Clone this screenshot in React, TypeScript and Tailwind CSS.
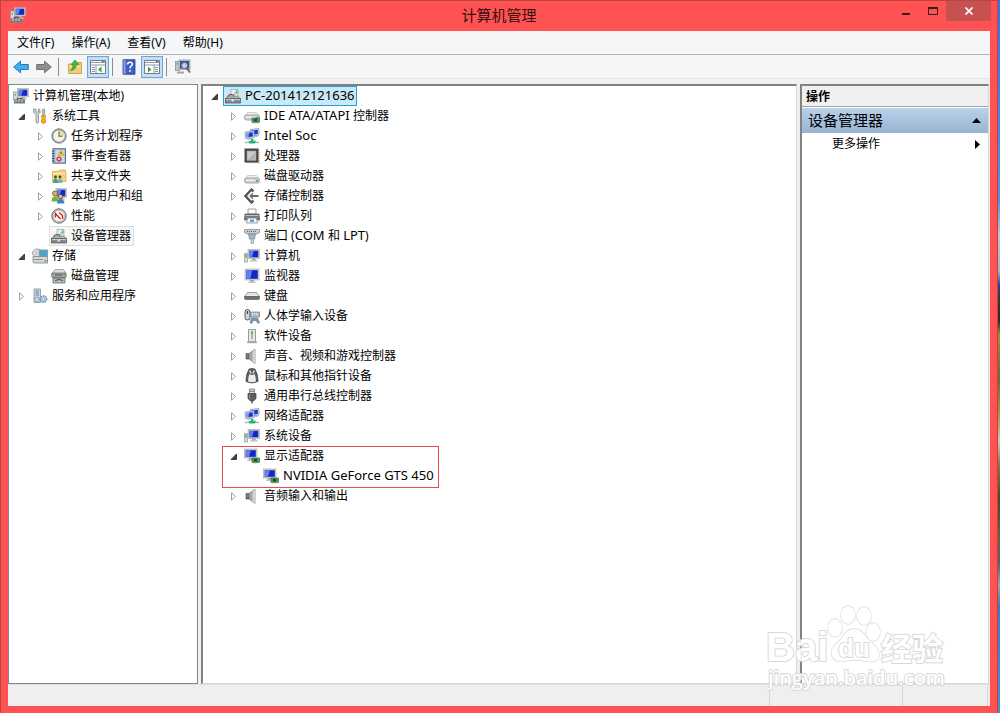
import type { ReactNode } from "react";
import clsx from "clsx";

type IconName = keyof typeof icons;

interface TreeNode {
  label: string;
  icon: IconName;
  state?: "open" | "closed";
  selected?: "active" | "inactive";
  marked?: boolean;
  children?: TreeNode[];
}

/* ---------- icon parts ---------- */

function Screen({ x = 0, y = 0, w = 11, h = 8 }: { x?: number; y?: number; w?: number; h?: number }) {
  return (
    <g>
      <rect x={x + w / 2 - 2} y={y + h} width="4" height="2" fill="#a9a9a4" />
      <rect x={x + w / 2 - 3.5} y={y + h + 1.5} width="7" height="1.5" fill="#c4c4be" />
      <rect x={x} y={y} width={w} height={h} fill="#d3d5d2" stroke="#a3a5a3" strokeWidth=".6" />
      <rect x={x + 1.2} y={y + 1.2} width={w - 2.4} height={h - 2.4} fill="#1526c4" />
      <path d={`M${x + 1.2} ${y + 1.2}h${w / 2 - 1}l-2 ${h - 2.4}h${-(w / 2 - 3)}z`} fill="#5f83ee" />
    </g>
  );
}

function MiniScreen({ x, y }: { x: number; y: number }) {
  return (
    <g>
      <path d={`M${x + 3} ${y + 6.5}h4l1 2h-6z`} fill="#b4bcc4" />
      <path d={`M${x} ${y + 1}l9-1v6.500l-8.500 1z`} fill="#cfdcec" stroke="#7f96b4" strokeWidth=".7" />
      <path d={`M${x + 1.3} ${y + 2}l6.500-.7v4.200l-6.200.8z`} fill="#1c35d2" />
      <path d={`M${x + 1.3} ${y + 2}l3-.3-1 4.200-1.700.3z`} fill="#7fa3f2" />
    </g>
  );
}

function Chip() {
  return (
    <g>
      <rect x="8" y="10" width="7.500" height="4.500" fill="#3f9a66" stroke="#2a6a46" strokeWidth=".6" />
      <rect x="10" y="11" width="3" height="2.500" fill="#1c4a31" />
      <path d="M9 15h6" stroke="#d0b64a" strokeDasharray="1 1" />
    </g>
  );
}

function Drive({ y = 0 }: { y?: number }) {
  return (
    <g transform={`translate(0 ${y})`}>
      <path d="M3.500 5.500h9l2.500 3.500H1z" fill="#f0f0f1" stroke="#b1b3b5" strokeWidth=".6" />
      <rect x=".5" y="8" width="15" height="5" rx="2" fill="#cfd1d3" stroke="#85888b" strokeWidth=".7" />
      <rect x="2" y="9.500" width="9" height="1.200" fill="#f0f1f2" />
      <rect x="12" y="10" width="2" height="1.600" fill="#36b336" />
    </g>
  );
}

const manage = (
  <>
    <rect x=".5" y="4" width="4" height="8" fill="#d8dadb" stroke="#8d9192" strokeWidth=".7" />
    <rect x="1.500" y="6" width="1.500" height="1.500" fill="#3bbb3b" />
    <Screen x={4.5} y={0.5} w={11} h={8.5} />
    <path d="M1 11.500h11v4H1z" fill="#6f7f88" />
    <path d="M2 13h9" stroke="#d5dde0" strokeDasharray="2 1" />
    <path d="M4 11.500v-1h5v1" fill="none" stroke="#4d5a61" />
  </>
);

const computer = (
  <>
    <rect x=".5" y="5.500" width="3" height="8.500" fill="#d4d6d6" stroke="#9c9fa0" strokeWidth=".7" />
    <rect x="1.200" y="6.500" width="1.400" height="3" fill="#35b435" />
    <Screen x={4} y={1.5} w={11.5} h={9} />
  </>
);

const network = (
  <>
    <MiniScreen x={6} y={0.5} />
    <MiniScreen x={1} y={3} />
    <path d="M1 14.500h14" stroke="#9fb3ab" strokeWidth="1.200" />
    <path d="M7 11h2.500v1.800H12l-1 2.700H5.500l-1-2.700H7z" fill="#2bb673" />
  </>
);

const speaker = (
  <>
    <path d="M2 5.500h3v5.500H2z" fill="#5d6265" stroke="#474b4e" strokeWidth=".6" />
    <path d="M5 5.500L11 1v14.500L5 11z" fill="#a3a8ab" stroke="#73787b" strokeWidth=".7" />
    <path d="M8.500 3.500L11 1v14.500l-2.500-2z" fill="#d0d4d6" />
    <path d="M2.500 7h2M2.500 9h2" stroke="#b7bcbf" strokeWidth=".7" />
  </>
);

const device = (
  <>
    <path d="M6 1.500h7v7H6z" fill="#eceeee" stroke="#9a9d9d" strokeWidth=".7" />
    <path d="M7 7l4-4v4z" fill="#c2c6c6" />
    <rect x="11" y="2.500" width="1.500" height="3" fill="#4cc04c" />
    <path d="M2.500 8h10.500l2.500 3H.5z" fill="#b4b8ba" stroke="#6e7274" strokeWidth=".6" />
    <rect x=".5" y="10.500" width="15" height="4.500" fill="#868b8e" stroke="#505456" strokeWidth=".7" />
    <path d="M1 11.500h14" stroke="#c9cdcf" />
    <path d="M3 8.500q0-2 3-2t3 2" fill="none" stroke="#4a4e50" />
    <rect x="6.500" y="11.500" width="2.500" height="2" fill="#e2e4e5" />
  </>
);

const display = (
  <>
    <Screen x={0.5} y={1} w={12.5} h={9} />
    <Chip />
  </>
);

const icons = {
  manage,
  computer,
  network,
  speaker,
  device,
  display,
  tools: (
    <>
      <path d="M1.500 1v3.500L4 6.500v8q1.200 1.500 2.500 0v-8L8 4.500V1.500L6.500 1v3h-2.500V1z" fill="#cfd3d6" stroke="#858b90" strokeWidth=".8" />
      <path d="M10.500 1h2l.5 3.500-.8 3h-1.200l-.8-3z" fill="#b8bcc0" stroke="#868b90" strokeWidth=".6" />
      <path d="M9.500 7.500h4v2l-.7 1 .7 1.500v2.500q-2 1.800-4 0V12l.7-1.500-.7-1z" fill="#f3ad1c" stroke="#c48212" strokeWidth=".7" />
    </>
  ),
  clock: (
    <>
      <circle cx="8" cy="8" r="7.200" fill="#a3a6a6" stroke="#6f7373" strokeWidth=".8" />
      <circle cx="8" cy="8" r="5.600" fill="#f6f4e6" />
      <path d="M8 8V2.400A5.600 5.600 0 0 1 13.600 8z" fill="#f3dc9c" />
      <path d="M8 3.500V8.300h3.500" fill="none" stroke="#56646f" strokeWidth="1.100" />
    </>
  ),
  event: (
    <>
      <rect x="2" y=".7" width="12.500" height="14.500" fill="#a6bdd8" stroke="#4d6485" strokeWidth=".9" />
      <rect x="4.500" y="2" width="9" height="12" fill="#c9d8ea" />
      <path d="M1 3h2.500M1 5.500h2.500M1 8h2.500M1 10.500h2.500M1 13h2.500" stroke="#3c4c66" />
      <path d="M10 2.200l3 5H7z" fill="#f5cf28" stroke="#b9930f" strokeWidth=".5" />
      <path d="M10 4v1.700" stroke="#333" strokeWidth=".8" />
      <circle cx="8" cy="11" r="2.600" fill="#d93a35" />
      <circle cx="8" cy="11" r="1" fill="#fff" />
    </>
  ),
  shared: (
    <>
      <path d="M1.500 3.500h6l1-1.500h6v3h.5v8.500H1.500z" fill="#f4d47c" stroke="#d0a544" strokeWidth=".7" />
      <path d="M2 5.500h12" stroke="#fdf0c4" />
      <circle cx="4.500" cy="9" r="1.400" fill="#5b4230" />
      <circle cx="9" cy="9" r="1.400" fill="#5b4230" />
      <path d="M2 15q0-4.500 2.500-4.500T7 15z" fill="#3ea487" />
      <path d="M6.800 15q0-4.500 2.400-4.500t2.400 4.500z" fill="#70b8b0" />
    </>
  ),
  users: (
    <>
      <Screen x={5} y={0.5} w={10.5} h={9} />
      <circle cx="4" cy="5.500" r="2.500" fill="#dcae7b" stroke="#7a5426" strokeWidth=".8" />
      <path d="M.5 13.500q0-5 3.500-5t4 5z" fill="#79b52f" />
      <circle cx="9.500" cy="8.500" r="2.200" fill="#e3bc8e" stroke="#56422c" strokeWidth=".8" />
      <path d="M6 15.500q0-4.500 3.500-4.500t4 4.500z" fill="#3f7fc8" />
    </>
  ),
  gauge: (
    <>
      <circle cx="8" cy="8" r="7.200" fill="#c3c6c6" stroke="#6c7070" />
      <circle cx="8" cy="8" r="5.500" fill="#fff" stroke="#999" strokeWidth=".5" />
      <path d="M4.500 9.500V5.500L9.500 11M8 4.500l3.500 3V11" fill="none" stroke="#d5201b" strokeWidth="1.400" />
    </>
  ),
  storage: (
    <>
      <ellipse cx="5.500" cy="5" rx="5" ry="4" fill="#dadddf" stroke="#8c9194" strokeWidth=".8" />
      <ellipse cx="5.500" cy="5" rx="1.500" ry="1" fill="#fff" stroke="#8c9194" strokeWidth=".6" />
      <rect x="7.500" y="2" width="8" height="6" fill="#45a6d8" stroke="#8b9499" strokeWidth=".8" />
      <path d="M1 8.500h14.500v6.500H2q-1-.5-1-1.500z" fill="#d4d6d8" stroke="#7c8083" strokeWidth=".8" />
      <path d="M2 11.500h9" stroke="#8d9194" />
      <rect x="12.500" y="12" width="2" height="1.500" fill="#35b435" />
    </>
  ),
  disk: (
    <>
      <path d="M4 1.500h8.500l2.500 4H1z" fill="#dcdddd" stroke="#8d8f8f" strokeWidth=".7" />
      <rect x=".7" y="5" width="14.500" height="4.500" rx="1" fill="#a4a7a8" stroke="#5c5f60" strokeWidth=".7" />
      <path d="M4 7h7" stroke="#4a4d4e" />
      <rect x="12" y="6" width="2" height="1.500" fill="#45c03d" />
      <path d="M2 10h12v5H2z" fill="#b9bcbd" stroke="#5c5f60" strokeWidth=".7" />
      <path d="M4 12.500q4-2 8 0" fill="none" stroke="#494c4d" />
    </>
  ),
  services: (
    <>
      <path d="M2 1h6.500v13.500H2z" fill="#d2d9de" stroke="#84909a" strokeWidth=".8" />
      <path d="M3.500 3h3.500M3.500 5h3.500M3.500 7h3.500" stroke="#6e7f8c" />
      <circle cx="5" cy="11.500" r="2.300" fill="none" stroke="#7ea2bd" strokeWidth="1.500" strokeDasharray="1.200 .6" />
      <circle cx="11.500" cy="11" r="3" fill="#d3e3f0" stroke="#6c95b6" strokeWidth="1.800" strokeDasharray="1.500 .7" />
      <circle cx="11.500" cy="11" r="1.100" fill="#fff" stroke="#6c95b6" strokeWidth=".6" />
    </>
  ),
  ide: (
    <>
      <Drive y={-1} />
      <Chip />
    </>
  ),
  cpu: (
    <>
      <path d="M15 2v12.500H2" fill="none" stroke="#c9a24a" strokeWidth="1.400" strokeDasharray="1 1" />
      <rect x=".5" y=".5" width="14" height="14" fill="#4b4744" />
      <rect x="3" y="3" width="9" height="9.500" fill="#c9cacb" stroke="#96979a" strokeWidth=".6" />
      <path d="M3.500 12l8-8v8z" fill="#b2b3b5" />
    </>
  ),
  drive: <Drive y={2} />,
  controller: (
    <>
      <path d="M9.500 3.500L7.500 1.500 1.500 8l6 6.500 2-2" fill="none" stroke="#54575a" strokeWidth="2.400" />
      <path d="M6 8h8.500" stroke="#54575a" strokeWidth="1.800" />
      <path d="M9 5.200L6 8l3 2.800" fill="none" stroke="#6b6e71" strokeWidth="1.200" />
    </>
  ),
  printer: (
    <>
      <path d="M4 1h8v5H4z" fill="#fafafa" stroke="#8a8a8a" strokeWidth=".8" />
      <path d="M1 6h14l.5 6H.5z" fill="#787c7f" stroke="#4c5053" strokeWidth=".7" />
      <path d="M1.500 7.500h13" stroke="#b9bdbf" />
      <path d="M3.500 10h9l1 5h-11z" fill="#f4f5f5" stroke="#7d8083" strokeWidth=".7" />
      <path d="M6 11.500h4v2.500H6z" fill="#56a8d8" />
    </>
  ),
  port: (
    <>
      <path d="M.5 1.500h15v3l-3 1.500h-9L.5 4.500z" fill="#c9cdd0" stroke="#868b8e" strokeWidth=".8" />
      <path d="M3 3.500h10" stroke="#5b6063" strokeDasharray="1 1" />
      <path d="M4.500 6h7L10.500 11h-5z" fill="#a4b6c3" stroke="#7c868d" strokeWidth=".7" />
      <path d="M7 11h2.500v4.500H7z" fill="#c9ced1" stroke="#8f959a" strokeWidth=".6" />
    </>
  ),
  monitor: <Screen x={1} y={1} w={14} h={11} />,
  keyboard: (
    <>
      <path d="M3.500 4.500h9l3 4H.5z" fill="#d9dbdd" stroke="#808488" strokeWidth=".7" />
      <path d="M.5 8.500h15v1.500q0 1.500-1.500 1.500H2Q.5 11.500.5 10z" fill="#6e7276" stroke="#505458" strokeWidth=".6" />
      <path d="M4 6h8M3 7.500h10" stroke="#f3f4f5" strokeWidth=".7" />
    </>
  ),
  hid: (
    <>
      <rect x="1" y="1.500" width="5" height="10.500" rx="2.500" fill="#d3d6d8" stroke="#4f555a" />
      <path d="M3.500 3v3" stroke="#3a4045" strokeWidth="1.200" />
      <path d="M6.500 4h9v5h-9z" fill="#b7bfc5" stroke="#737b81" strokeWidth=".7" />
      <path d="M8 6h6" stroke="#fff" strokeDasharray="1 1" />
      <path d="M6 14.500l1.500-4.500h6l2 4.500-1.500 1-2-3h-2.500l-2 3z" fill="#7f9bb2" stroke="#566e82" strokeWidth=".6" />
    </>
  ),
  software: (
    <>
      <path d="M4.500 1.500h7v12h-7z" fill="#e8eae6" stroke="#8d918c" strokeWidth=".9" />
      <path d="M8 4v7" stroke="#9fa39f" strokeWidth="1.500" />
      <rect x="7.200" y="3" width="1.600" height="3" fill="#58b548" />
      <path d="M3 13.500h10v1.700H3z" fill="#a7aba6" />
    </>
  ),
  mouse: (
    <>
      <path d="M5 1q-3.500 6-3 12.500 6 3 12 0Q14.500 7 11 1 8 0 5 1z" fill="#5c5f62" stroke="#3f4244" strokeWidth=".7" />
      <path d="M5.500 6Q4 9 4 13.500q4 1.500 8 0Q12 9 10.500 6 8 8 5.500 6z" fill="#eceded" />
      <path d="M5.700 2.500l1.300 3M10.300 2.500L9 5.500" stroke="#e4e5e6" strokeWidth="1.400" />
    </>
  ),
  usb: (
    <>
      <path d="M5.500 1h5v4.500h-5z" fill="#e0e2e3" stroke="#6e7275" strokeWidth=".8" />
      <path d="M7 2.500v1.500M9 2.500v1.500" stroke="#45494c" />
      <path d="M4 5.500h8v5L9.500 13h-3L4 10.500z" fill="#5b5f62" stroke="#3c4042" strokeWidth=".7" />
      <path d="M5.500 6.500v4" stroke="#94989b" />
      <path d="M8 13v2.500" stroke="#5b5f62" strokeWidth="1.500" />
    </>
  ),
  back: <path d="M.7 8L7.500 2.200v3.300h7.800v5H7.500v3.300z" fill="#3eb1ee" stroke="#1c6fb0" strokeWidth=".9" />,
  forward: <path d="M15.300 8L8.500 2.200v3.300H.7v5h7.800v3.300z" fill="#8f8f8f" stroke="#6a6a6a" strokeWidth=".9" />,
  folderUp: (
    <>
      <path d="M1.500 5h5l1-1.500h7v11h-13z" fill="#f0cd76" stroke="#bf9538" strokeWidth=".8" />
      <path d="M2 7.500h12" stroke="#fae9b8" />
      <path d="M3 11.500Q6 10 6 5.500H4L8 1l4 4.500H9.500Q9 11.500 3 11.500z" fill="#3dbb35" stroke="#25851f" strokeWidth=".5" />
    </>
  ),
  treePane: (
    <>
      <path d="M.5 1.500h15v13H.5z" fill="#fff" stroke="#6f7c89" />
      <path d="M1 3.500h14M1 6h14" stroke="#8c9aa8" />
      <path d="M12 2.500h2.500" stroke="#38424c" strokeDasharray="1 .5" />
      <path d="M6 6v8.500" stroke="#8c9aa8" />
      <path d="M2 8.500h3M2 10.500h3M2 12.500h3" stroke="#8191a0" />
      <path d="M11.500 7.500v6L8 10.500z" fill="#37a82d" />
    </>
  ),
  actionPane: (
    <>
      <path d="M.5 1.500h15v13H.5z" fill="#fff" stroke="#6f7c89" />
      <path d="M1 3.500h14M1 6h14" stroke="#8c9aa8" />
      <path d="M12 2.500h2.500" stroke="#38424c" strokeDasharray="1 .5" />
      <path d="M10 6v8.500" stroke="#8c9aa8" />
      <path d="M11 8.500h3M11 10.500h3M11 12.500h3" stroke="#8191a0" />
      <path d="M4 7.500v6l3.500-3z" fill="#37a82d" />
    </>
  ),
  help: (
    <>
      <path d="M2 .7h12v14.600H2z" fill="#3f5fc4" stroke="#2a3f8e" strokeWidth=".8" />
      <path d="M2.500 1h2v14h-2z" fill="#8ba2e4" />
      <path d="M6.500 5.500q0-2.300 2.500-2.300t2.300 2q0 1.300-1.300 2-1 .6-1 2.300" fill="none" stroke="#fff" strokeWidth="1.500" />
      <path d="M8.200 11h1.600v1.700H8.200z" fill="#fff" />
    </>
  ),
  scan: (
    <>
      <rect x=".5" y="2.500" width="4" height="9" fill="#c4c7c9" stroke="#83878a" strokeWidth=".7" />
      <rect x="1.500" y="4" width="1.200" height="1.500" fill="#35b435" />
      <rect x="4" y="1" width="11" height="9.500" fill="#c5cad2" stroke="#858c96" strokeWidth=".7" />
      <rect x="5" y="2" width="9" height="7.500" fill="#3550a8" />
      <circle cx="9.500" cy="6.500" r="3" fill="#d8e9f7" fillOpacity=".85" stroke="#5b6f86" />
      <path d="M11.500 9l3.500 4.500" stroke="#70604e" strokeWidth="1.800" />
      <path d="M2 12.500h7v2H2z" fill="#9ea2a5" />
    </>
  ),
};

function Icon({ name, className }: { name: IconName; className?: string }) {
  return (
    <svg viewBox="0 0 16 16" className={clsx("size-4 shrink-0", className)} aria-hidden="true">
      {icons[name]}
    </svg>
  );
}

/* ---------- data ---------- */

const consoleTree: TreeNode[] = [
  {
    label: "系统工具",
    icon: "tools",
    state: "open",
    children: [
      { label: "任务计划程序", icon: "clock", state: "closed" },
      { label: "事件查看器", icon: "event", state: "closed" },
      { label: "共享文件夹", icon: "shared", state: "closed" },
      { label: "本地用户和组", icon: "users", state: "closed" },
      { label: "性能", icon: "gauge", state: "closed" },
      { label: "设备管理器", icon: "device", selected: "inactive" },
    ],
  },
  {
    label: "存储",
    icon: "storage",
    state: "open",
    children: [{ label: "磁盘管理", icon: "disk" }],
  },
  { label: "服务和应用程序", icon: "services", state: "closed" },
];

const deviceTree: TreeNode[] = [
  {
    label: "PC-201412121636",
    icon: "device",
    state: "open",
    selected: "active",
    children: [
      { label: "IDE ATA/ATAPI 控制器", icon: "ide", state: "closed" },
      { label: "Intel Soc", icon: "network", state: "closed" },
      { label: "处理器", icon: "cpu", state: "closed" },
      { label: "磁盘驱动器", icon: "drive", state: "closed" },
      { label: "存储控制器", icon: "controller", state: "closed" },
      { label: "打印队列", icon: "printer", state: "closed" },
      { label: "端口 (COM 和 LPT)", icon: "port", state: "closed" },
      { label: "计算机", icon: "computer", state: "closed" },
      { label: "监视器", icon: "monitor", state: "closed" },
      { label: "键盘", icon: "keyboard", state: "closed" },
      { label: "人体学输入设备", icon: "hid", state: "closed" },
      { label: "软件设备", icon: "software", state: "closed" },
      { label: "声音、视频和游戏控制器", icon: "speaker", state: "closed" },
      { label: "鼠标和其他指针设备", icon: "mouse", state: "closed" },
      { label: "通用串行总线控制器", icon: "usb", state: "closed" },
      { label: "网络适配器", icon: "network", state: "closed" },
      { label: "系统设备", icon: "computer", state: "closed" },
      {
        label: "显示适配器",
        icon: "display",
        state: "open",
        marked: true,
        children: [{ label: "NVIDIA GeForce GTS 450", icon: "display" }],
      },
      { label: "音频输入和输出", icon: "speaker", state: "closed" },
    ],
  },
];

/* ---------- tree ---------- */

function Twisty({ state, label }: { state?: "open" | "closed"; label: string }) {
  if (!state) return <span className="w-[17px] shrink-0" />;
  return (
    <button
      type="button"
      aria-label={`${state === "open" ? "折叠" : "展开"} ${label}`}
      className="flex w-[17px] shrink-0 items-center justify-center"
    >
      <svg viewBox="0 0 9 9" className="size-[9px]" aria-hidden="true">
        {state === "open" ? (
          <path d="M7.500 2v5.500H2z" fill="#404040" stroke="#262626" strokeWidth=".8" />
        ) : (
          <path d="M2.500 .8v7.400L6.500 4.500z" fill="#fff" stroke="#a0a0a0" />
        )}
      </svg>
    </button>
  );
}

// Latin words are set one pixel larger than the Chinese around them
function MixedText({ text }: { text: string }) {
  const runs = text.match(/[A-Za-z][\w\s/-]*|[^A-Za-z]+/g) ?? [];
  return (
    <span className="whitespace-pre">
      {runs.map((run, i) => (/^[A-Za-z]/.test(run) ? <span key={i} className="text-[13px] leading-none">{run}</span> : run))}
    </span>
  );
}

function NodeLabel({ node }: { node: Pick<TreeNode, "label" | "icon" | "selected"> }) {
  return (
    <button
      type="button"
      className={clsx(
        "flex h-5 items-center gap-1 border px-px whitespace-nowrap",
        node.selected === "active" && "border-[#26a0da] bg-[#cbe8f6]",
        node.selected === "inactive" && "border-[#dedede] bg-[#f7f7f7] pr-0.5",
        !node.selected && "border-transparent"
      )}
    >
      <Icon name={node.icon} />
      <MixedText text={node.label} />
    </button>
  );
}

function Tree({ nodes, className }: { nodes: TreeNode[]; className?: string }) {
  return (
    <ul className={className}>
      {nodes.map((node) => (
        <li key={node.label} className={clsx(node.marked && "relative")}>
          <div className="flex">
            <Twisty state={node.state} label={node.label} />
            <NodeLabel node={node} />
          </div>
          {node.children && <Tree nodes={node.children} className="pl-[19px]" />}
          {node.marked && (
            <span className="pointer-events-none absolute top-0 -bottom-0.5 left-[-3px] w-[217px] border border-[#f04848]" />
          )}
        </li>
      ))}
    </ul>
  );
}

/* ---------- bars ---------- */

function TitleBar() {
  return (
    <header className="grid h-[30px] grid-cols-[1fr_auto_1fr] items-start">
      <Icon name="manage" className="mt-1.5 ml-0.5" />
      <h1 className="text-[15px] leading-7 text-[#33100f]">计算机管理</h1>
      <div className="-mr-px flex justify-end">
        <button type="button" aria-label="最小化" className="flex h-5 w-[27px] items-center justify-center">
          <span className="mt-1.5 h-0.5 w-2 bg-[#33201f]" />
        </button>
        <button type="button" aria-label="最大化" className="flex h-5 w-[27px] items-center justify-center">
          <span className="h-2 w-2.5 border border-t-2 border-[#33201f]" />
        </button>
        <button type="button" aria-label="关闭" className="flex h-5 w-[45px] items-center justify-center bg-[#c75050]">
          <svg viewBox="0 0 8 8" className="size-2" aria-hidden="true">
            <path d="M.5 .5l7 7M7.500 .5l-7 7" stroke="#fff" strokeWidth="1.700" />
          </svg>
        </button>
      </div>
    </header>
  );
}

function ToolButton({ icon, label, pressed }: { icon: IconName; label: string; pressed?: boolean }) {
  return (
    <button
      type="button"
      aria-label={label}
      aria-pressed={pressed}
      className={clsx(
        "flex size-[22px] items-center justify-center",
        pressed && "border border-[#6ba5e0] bg-[#c5def5]"
      )}
    >
      <Icon name={icon} />
    </button>
  );
}

function ToolSeparator() {
  return (
    <span className="flex h-[18px] w-[7px] pl-0.5">
      <span className="w-px bg-[#8d8d8d]" />
    </span>
  );
}

function Pane({ children, className }: { children: ReactNode; className?: string }) {
  return (
    <div className={clsx("border-t-2 border-r border-b border-l-2 border-[#828282] border-r-[#d8d8d8] border-b-[#d8d8d8] bg-white", className)}>
      {children}
    </div>
  );
}

function Watermark() {
  const outline = {
    fill: "#fff",
    stroke: "#d6d6d6",
    strokeWidth: 2,
    paintOrder: "stroke" as const,
  };
  return (
    <svg viewBox="0 0 184 90" className="pointer-events-none absolute right-[46px] bottom-[21px] h-[90px] w-[184px] opacity-90">
      <g {...outline} strokeWidth="1.300">
        <ellipse cx="68" cy="26" rx="7" ry="9" />
        <ellipse cx="81" cy="13" rx="7" ry="9" />
        <ellipse cx="97" cy="14" rx="7" ry="9" />
        <ellipse cx="106" cy="30" rx="7" ry="9" />
        <path d="M87 27q8 0 13 9 4 4 8 8 6 7 3 13-4 4-12 2-12-2-22 0-9 2-12-5-2-7 4-12 5-4 7-8 4-7 11-7z" />
      </g>
      <g {...outline} className="font-['Liberation_Sans',sans-serif] font-bold">
        <text x="-1" y="59" fontSize="40">Bai</text>
        <text x="71" y="55" fontSize="26">du</text>
      </g>
      <g {...outline} className="font-['Noto_Sans_CJK_SC',sans-serif] font-bold">
        <text x="114" y="58" fontSize="31">经验</text>
      </g>
      <text {...outline} x="1" y="83" fontSize="20" className="font-['Open_Sans',sans-serif] font-semibold">
        jingyan.baidu.com
      </text>
    </svg>
  );
}

export default function App() {
  return (
    <div className="flex min-h-screen bg-[linear-gradient(#2f78e0_0%,#5a8fdc_28%,#c5c2c6_33%,#aab0c4_38%,#26439a_40%,#3a3328_42%,#2c2a1c_45%,#9a9040_47%,#6f6a28_53%,#b0a050_59%,#d0c8b8_62%,#8a7a4a_65%,#4a4620_70%,#6a6440_76%,#5a606a_79%,#a8a098_82%,#3a80c0_85%,#4a90c8_100%)] pr-0.5 font-['Noto_Sans','Noto_Sans_CJK_SC',sans-serif] text-xs text-black">
      <div className="relative flex min-w-0 flex-1 flex-col border-t border-r border-l border-[#bf4343] bg-[#ff5252] px-[7px] pb-[7px]">
        <TitleBar />

        <div className="flex flex-1 flex-col bg-[#f0f0f0]">
          <nav className="flex h-6 items-center gap-px border-b border-[#b5b5b5] bg-[#f5f6f7] pl-px">
            {["文件(F)", "操作(A)", "查看(V)", "帮助(H)"].map((item) => (
              <button key={item} type="button" className="px-2 leading-5">
                {item}
              </button>
            ))}
          </nav>

          <div className="flex items-center gap-px border-b border-[#e3e5e7] bg-[#f5f6f7] pt-px pl-0.5">
            <ToolButton icon="back" label="后退" />
            <ToolButton icon="forward" label="前进" />
            <ToolSeparator />
            <ToolButton icon="folderUp" label="上一级" />
            <ToolButton icon="treePane" label="显示/隐藏控制台树" pressed />
            <ToolSeparator />
            <ToolButton icon="help" label="帮助" />
            <ToolButton icon="actionPane" label="显示/隐藏操作窗格" pressed />
            <ToolSeparator />
            <ToolButton icon="scan" label="扫描检测硬件改动" />
          </div>

          <main className="flex flex-1 gap-[3px] pt-[5px] pr-px">
            <div className="w-[190px] shrink-0 border border-[#828790] bg-white pt-px pl-0.5">
              <div className="flex">
                <NodeLabel node={{ label: "计算机管理(本地)", icon: "manage" }} />
              </div>
              <Tree nodes={consoleTree} className="pl-0.5" />
            </div>

            <Pane className="min-w-0 flex-1 pl-[3px]">
              <Tree nodes={deviceTree} />
            </Pane>

            <Pane className="w-[189px] shrink-0">
              <h2 className="h-[21px] border-b border-[#a0a0a0] bg-[#f0f0f0] pl-1 leading-[22px] font-bold">操作</h2>
              <button
                type="button"
                className="mt-px flex h-[25px] w-full items-center justify-between bg-linear-to-b from-[#b9d1ea] to-[#99b4d1] pr-[7px] pl-1.5 text-[15px] leading-[25px]"
              >
                设备管理器
                <svg viewBox="0 0 9 5" className="h-[5px] w-[9px]" aria-hidden="true">
                  <path d="M0 5L4.500 0 9 5z" />
                </svg>
              </button>
              <button type="button" className="flex h-[22px] w-full items-center justify-between pr-2 pl-[30px]">
                更多操作
                <svg viewBox="0 0 5 9" className="h-[9px] w-[5px]" aria-hidden="true">
                  <path d="M0 0l5 4.500L0 9z" />
                </svg>
              </button>
            </Pane>
          </main>

          <footer className="flex h-[22px] justify-end border-t border-[#e0e0e0] bg-[#efefef] pr-0.5 pt-px">
            <span className="w-[133px] border-l border-[#d5d5d5]" />
            <span className="w-[86px] border-x border-[#d5d5d5]" />
          </footer>
        </div>

        <Watermark />
      </div>
    </div>
  );
}
